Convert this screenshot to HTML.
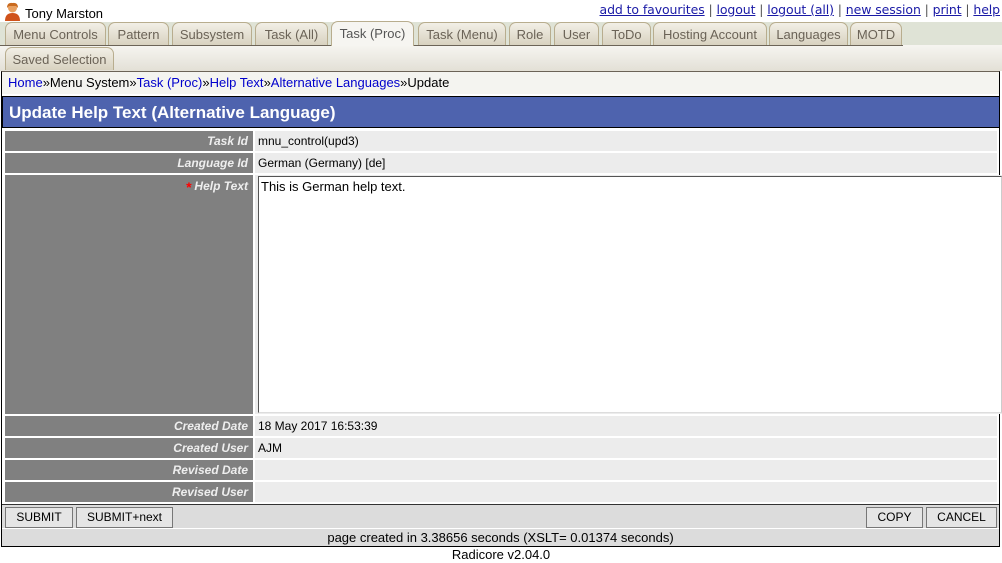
<!DOCTYPE html>
<html><head><meta charset="utf-8"><style>
*{margin:0;padding:0;box-sizing:border-box}
body{width:1002px;height:561px;background:#fff;font-family:"Liberation Sans",sans-serif;font-size:13px;position:relative;overflow:hidden}
.a{position:absolute}
a{color:#00c;text-decoration:none}
.top a{text-decoration:underline;color:#1a1aa6}
.tab{position:absolute;height:23px;top:22px;background:linear-gradient(#f2efe6,#d8d2c0);border:1px solid #b8ad8e;border-bottom:none;border-radius:7px 7px 0 0;color:#6b6357;font-size:13px;text-align:center;line-height:23px}
.lab{position:absolute;left:5px;width:248px;background:#808080;color:#eee;font-weight:bold;font-style:italic;font-size:12px;text-align:right;padding-right:5px}
.val{position:absolute;left:255px;width:742px;background:#ececec;font-size:12px;padding-left:3px}
.btn{position:absolute;top:507px;height:21px;background:#e5e5e5;border:1px solid #777;font-size:12px;text-align:center;line-height:19px}
</style></head><body>
<svg class="a" style="left:4px;top:2px" width="17" height="19" viewBox="0 0 17 19"><circle cx="8.5" cy="6" r="4.5" fill="#e8a060"/><path d="M3 6 Q3 0 8.5 1 Q14 0 14 6 L12 4 L5 4Z" fill="#c96a1e"/><path d="M1 19 Q1 11 8.5 11 Q16 11 16 19Z" fill="#d0521b"/></svg>
<div class="a" style="left:25px;top:6px">Tony Marston</div>
<div class="a top" style="right:2px;top:2px;font-size:12.5px;color:#555;font-family:'DejaVu Sans',sans-serif;letter-spacing:-0.1px"><a>add to favourites</a> | <a>logout</a> | <a>logout (all)</a> | <a>new session</a> | <a>print</a> | <a>help</a></div>
<div class="a" style="left:0;top:22px;width:1002px;height:23px;background:#dfe3d6"></div>
<div class="a" style="left:0;top:45px;width:1002px;height:26px;background:linear-gradient(#f6f5f1,#e3e0d6)"></div>
<div class="a" style="left:0;top:45px;width:903px;height:1px;background:#6b6357"></div>
<div class="tab" style="left:5px;width:101px">Menu Controls</div>
<div class="tab" style="left:108px;width:61px">Pattern</div>
<div class="tab" style="left:172px;width:80px">Subsystem</div>
<div class="tab" style="left:255px;width:73px">Task (All)</div>
<div class="tab" style="left:331px;width:83px;top:21px;height:25px;background:#f6f5f1;color:#555">Task (Proc)</div>
<div class="tab" style="left:418px;width:88px">Task (Menu)</div>
<div class="tab" style="left:509px;width:42px">Role</div>
<div class="tab" style="left:554px;width:45px">User</div>
<div class="tab" style="left:602px;width:49px">ToDo</div>
<div class="tab" style="left:653px;width:114px">Hosting Account</div>
<div class="tab" style="left:769px;width:79px">Languages</div>
<div class="tab" style="left:850px;width:52px">MOTD</div>
<div class="tab" style="left:5px;width:109px;top:47px">Saved Selection</div>
<div class="a" style="left:1px;top:71px;width:999px;height:476px;border:1px solid #000;border-top:1px solid #6b6357;background:#fff"></div>
<div class="a" style="left:2px;top:72px;width:997px;height:22px;background:#f4f4f0;padding-left:6px;line-height:21px"><a>Home</a>»Menu System»<a>Task (Proc)</a>»<a>Help Text</a>»<a>Alternative Languages</a>»Update</div>
<div class="a" style="left:2px;top:96px;width:998px;height:32px;background:#4e63ae;border:1px solid #000;color:#fff;font-weight:bold;font-size:17px;padding-left:6px;line-height:31px">Update Help Text (Alternative Language)</div>
<div class="lab" style="top:131px;height:20px;line-height:20px">Task Id</div>
<div class="val" style="top:131px;height:20px;line-height:20px">mnu_control(upd3)</div>
<div class="lab" style="top:153px;height:20px;line-height:20px">Language Id</div>
<div class="val" style="top:153px;height:20px;line-height:20px">German (Germany) [de]</div>
<div class="lab" style="top:175px;height:239px;padding-top:4px"><span style="color:#f00;font-size:14px;vertical-align:top">*</span> Help Text</div>
<div class="a" style="left:255px;top:175px;width:747px;height:239px;background:#ececec"></div>
<div class="a" style="left:258px;top:176px;width:744px;height:237px;background:#fff;border:1px solid #555;border-right-color:#ccc;border-bottom-color:#ddd;padding:2px 2px;font-size:13px">This is German help text.</div>
<div class="lab" style="top:416px;height:20px;line-height:20px">Created Date</div>
<div class="val" style="top:416px;height:20px;line-height:20px">18 May 2017 16:53:39</div>
<div class="lab" style="top:438px;height:20px;line-height:20px">Created User</div>
<div class="val" style="top:438px;height:20px;line-height:20px">AJM</div>
<div class="lab" style="top:460px;height:20px;line-height:20px">Revised Date</div>
<div class="val" style="top:460px;height:20px;line-height:20px"></div>
<div class="lab" style="top:482px;height:20px;line-height:20px">Revised User</div>
<div class="val" style="top:482px;height:20px;line-height:20px"></div>
<div class="a" style="left:2px;top:504px;width:997px;height:25px;background:#dcdcdc;border-top:1px solid #333;border-bottom:1px solid #fff"></div>
<div class="btn" style="left:5px;width:68px">SUBMIT</div>
<div class="btn" style="left:76px;width:97px">SUBMIT+next</div>
<div class="btn" style="left:866px;width:57px">COPY</div>
<div class="btn" style="left:926px;width:71px">CANCEL</div>
<div class="a" style="left:2px;top:529px;width:997px;height:17px;background:#dcdcdc;text-align:center;line-height:17px">page created in 3.38656 seconds (XSLT= 0.01374 seconds)</div>
<div class="a" style="left:0;top:547px;width:1002px;text-align:center;line-height:16px">Radicore v2.04.0</div>
</body></html>
